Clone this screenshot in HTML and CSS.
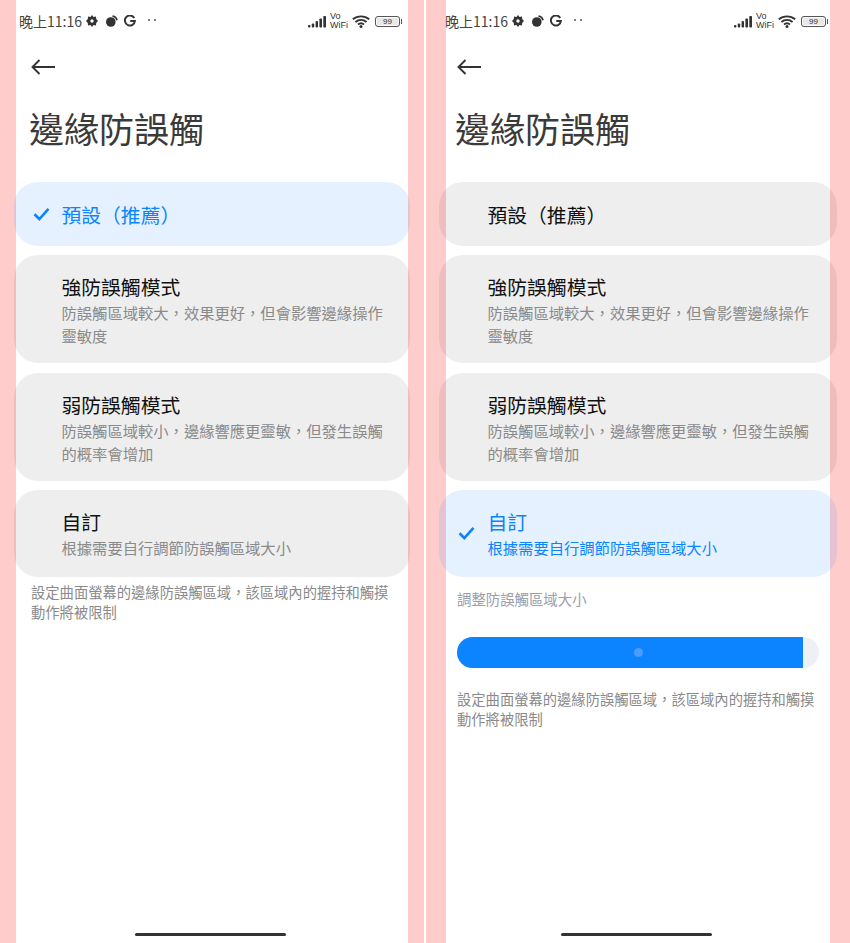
FILE: index.html
```html
<!DOCTYPE html>
<html lang="zh-Hant">
<head>
  <meta charset="UTF-8" />
  <title>邊緣防誤觸</title>
  <link rel="stylesheet" href="styles.css">
</head>
<body>
  <svg class="defs" width="0" height="0" aria-hidden="true">
    <symbol id="icon-gear" viewBox="0 0 12 12">
      <path fill="#333" fill-rule="evenodd" d="M6 0 7.500 1.900 10 1.600l.2 2.500L12 6l-1.800 1.900-.2 2.500-2.500-.3L6 12l-1.500-1.900-2.500.3-.2-2.500L0 6l1.800-1.900.2-2.500 2.500.3zM6 4.300a1.700 1.700 0 1 0 0 3.400 1.700 1.700 0 0 0 0-3.400z"/>
    </symbol>
    <symbol id="icon-moon" viewBox="0 0 12 12">
      <circle cx="4.800" cy="7" r="4.800" fill="#333"/>
      <path d="M6.500 1.200c2.300.3 4 1.900 4.500 4.100" fill="none" stroke="#333" stroke-width="1.800"/>
    </symbol>
    <symbol id="icon-g" viewBox="0 0 12 12">
      <path d="M10.200 2.900A5 5 0 1 0 10.900 6H6.300" fill="none" stroke="#333" stroke-width="2"/>
    </symbol>
    <symbol id="icon-signal" viewBox="0 0 18 12">
      <g fill="#333">
        <rect x="0" y="9" width="2.400" height="2.500" rx=".8"/>
        <rect x="3.800" y="7.500" width="2.400" height="4" rx=".8"/>
        <rect x="7.600" y="5" width="2.400" height="6.500" rx=".8"/>
        <rect x="11.400" y="2.500" width="2.600" height="9" rx=".8"/>
        <rect x="15.300" y="0" width="2.700" height="11.500" rx=".8"/>
      </g>
    </symbol>
    <symbol id="icon-wifi" viewBox="0 0 18 13">
      <g fill="none" stroke="#333" stroke-width="1.900">
        <path d="M.8 4.300C5.500.4 12.500.4 17.200 4.300"/>
        <path d="M3.400 7C6.700 4.300 11.300 4.300 14.600 7"/>
        <path d="M6 9.500C7.800 8 10.200 8 12 9.500"/>
      </g>
      <circle cx="9" cy="11.500" r="1.500" fill="#333"/>
    </symbol>
    <symbol id="icon-check" viewBox="0 0 17 14">
      <path d="M1.500 7.300 6.300 12 15.500 1.800" fill="none" stroke="#0d84ff" stroke-width="2.600"/>
    </symbol>
    <symbol id="icon-back" viewBox="0 0 24 16">
      <path d="M8.500 1 1.500 8l7 7M1.500 8H24" fill="none" stroke="#333" stroke-width="1.900"/>
    </symbol>
  </svg>

  <!-- left: default option selected -->
  <div class="phone phone-left">
    <div class="status-bar">
      <div class="status-left">
        <span class="clock">晚上11:16</span>
        <svg class="ic-small"><use href="#icon-gear"/></svg>
        <svg class="ic-small ic-moon"><use href="#icon-moon"/></svg>
        <svg class="ic-small ic-g"><use href="#icon-g"/></svg>
        <span class="dots"><i></i><i></i></span>
      </div>
      <div class="status-right">
        <svg class="ic-signal"><use href="#icon-signal"/></svg>
        <span class="vowifi">Vo<br>WiFi</span>
        <svg class="ic-wifi"><use href="#icon-wifi"/></svg>
        <span class="battery">99</span>
      </div>
    </div>
    <svg class="back"><use href="#icon-back"/></svg>
    <h1 class="title">邊緣防誤觸</h1>
    <div class="options">
      <div class="option option-short selected">
        <svg class="check"><use href="#icon-check"/></svg>
        <div class="option-name">預設（推薦）</div>
      </div>
      <div class="option">
        <div class="option-name">強防誤觸模式</div>
        <div class="option-desc">防誤觸區域較大，效果更好，但會影響邊緣操作靈敏度</div>
      </div>
      <div class="option">
        <div class="option-name">弱防誤觸模式</div>
        <div class="option-desc">防誤觸區域較小，邊緣響應更靈敏，但發生誤觸的概率會增加</div>
      </div>
      <div class="option option-custom">
        <div class="option-name">自訂</div>
        <div class="option-desc">根據需要自行調節防誤觸區域大小</div>
      </div>
    </div>
    <p class="note">設定曲面螢幕的邊緣防誤觸區域，該區域內的握持和觸摸動作將被限制</p>
    <div class="home-bar"></div>
  </div>

  <!-- right: custom option selected, slider shown -->
  <div class="phone phone-right">
    <div class="status-bar">
      <div class="status-left">
        <span class="clock">晚上11:16</span>
        <svg class="ic-small"><use href="#icon-gear"/></svg>
        <svg class="ic-small ic-moon"><use href="#icon-moon"/></svg>
        <svg class="ic-small ic-g"><use href="#icon-g"/></svg>
        <span class="dots"><i></i><i></i></span>
      </div>
      <div class="status-right">
        <svg class="ic-signal"><use href="#icon-signal"/></svg>
        <span class="vowifi">Vo<br>WiFi</span>
        <svg class="ic-wifi"><use href="#icon-wifi"/></svg>
        <span class="battery">99</span>
      </div>
    </div>
    <svg class="back"><use href="#icon-back"/></svg>
    <h1 class="title">邊緣防誤觸</h1>
    <div class="options">
      <div class="option option-short">
        <div class="option-name">預設（推薦）</div>
      </div>
      <div class="option">
        <div class="option-name">強防誤觸模式</div>
        <div class="option-desc">防誤觸區域較大，效果更好，但會影響邊緣操作靈敏度</div>
      </div>
      <div class="option">
        <div class="option-name">弱防誤觸模式</div>
        <div class="option-desc">防誤觸區域較小，邊緣響應更靈敏，但發生誤觸的概率會增加</div>
      </div>
      <div class="option option-custom selected">
        <svg class="check"><use href="#icon-check"/></svg>
        <div class="option-name">自訂</div>
        <div class="option-desc">根據需要自行調節防誤觸區域大小</div>
      </div>
    </div>
    <div class="slider-label">調整防誤觸區域大小</div>
    <div class="slider">
      <div class="slider-fill"><span class="slider-dot"></span></div>
    </div>
    <p class="note">設定曲面螢幕的邊緣防誤觸區域，該區域內的握持和觸摸動作將被限制</p>
    <div class="home-bar"></div>
  </div>
</body>
</html>
```

FILE: styles.css
```css
* {
  box-sizing: border-box;
}

html, body {
  margin: 0;
  height: 943px;
  overflow: hidden;
}

body {
  display: flex;
  gap: 2px;
  background: #fff;
  font-family: "Noto Sans CJK TC", "Noto Sans", sans-serif;
  color: #111;
}

.defs {
  position: absolute;
}

.phone {
  width: 424px;
  height: 943px;
  display: flex;
  flex-direction: column;
}

.phone-left {
  background: linear-gradient(90deg, #ffcccc 16px, #fff 16px, #fff 408px, #ffcccc 408px);
}

.phone-right {
  background: linear-gradient(90deg, #ffcccc 20px, #fff 20px, #fff 404px, #ffcccc 404px);
}

/* status bar */
.status-bar {
  display: flex;
  justify-content: space-between;
  align-items: center;
  height: 20px;
  margin-top: 11px;
  padding: 0 24px 0 19px;
}

.status-left, .status-right {
  display: flex;
  align-items: center;
}

.clock {
  font-size: 14px;
  color: #444;
  white-space: nowrap;
}

.ic-small {
  width: 12px;
  height: 12px;
  margin-left: 4px;
}

.ic-moon {
  margin-left: 8px;
}

.ic-g {
  margin-left: 6px;
}

.dots {
  display: flex;
  gap: 4px;
  margin-left: 12px;
  margin-top: -2px;
}

.dots i {
  width: 2px;
  height: 2px;
  border-radius: 50%;
  background: #555;
}

.ic-signal {
  width: 18px;
  height: 12px;
  margin-top: 2px;
}

.vowifi {
  font-family: "Liberation Sans", sans-serif;
  font-size: 9px;
  line-height: 9px;
  color: #333;
  margin-left: 4px;
}

.ic-wifi {
  width: 18px;
  height: 13px;
  margin-left: 4px;
}

.battery {
  position: relative;
  width: 25px;
  height: 11px;
  margin-left: 5px;
  border: 1px solid #555;
  border-radius: 3px;
  background: #e8e8e8;
  box-shadow: inset 0 0 0 1px #fff;
  font-family: "Liberation Sans", sans-serif;
  font-size: 8px;
  line-height: 9px;
  text-align: center;
  color: #333;
}

.battery::after {
  content: "";
  position: absolute;
  right: -3px;
  top: 2px;
  width: 1px;
  height: 5px;
  background: #555;
}

/* header */
.back {
  width: 24px;
  height: 16px;
  margin: 28px 0 0 31px;
  flex: none;
}

.title {
  margin: 27px 0 0 29px;
  font-size: 35px;
  font-weight: 400;
  line-height: 52px;
  color: #3a3a3a;
}

/* options */
.options {
  display: flex;
  flex-direction: column;
  gap: 9.34px;
  margin: 28px 13px 0 13px;
}

.phone-left .options {
  margin-left: 14px;
  margin-right: 14px;
}

.phone-left .option {
  padding-left: 47.5px;
}

.option {
  position: relative;
  min-height: 108px;
  padding: 18px 26px 0 48.5px;
  border-radius: 24px;
  background: rgba(0, 0, 0, 0.065);
}

.option-short {
  min-height: 64px;
  padding-top: 19px;
}

.option-custom {
  min-height: 87px;
}

.option-name {
  font-size: 19.8px;
  line-height: 28px;
  color: #111;
}

.option-desc {
  font-size: 15.3px;
  line-height: 23px;
  color: #8a8a8a;
}

.option.selected {
  background: rgba(20, 125, 255, 0.11);
}

.selected .option-name, .selected .option-desc {
  color: #0d84ff;
}

.check {
  position: absolute;
  left: 19px;
  top: 50%;
  width: 17px;
  height: 14px;
  margin-top: -7px;
}

/* slider */
.slider-label {
  margin: 11px 0 0 31px;
  font-size: 14.4px;
  line-height: 22px;
  color: #9a9daa;
}

.slider {
  height: 31px;
  margin: 27px 31px 0;
  border-radius: 16px;
  background: #edf0f5;
  overflow: hidden;
}

.slider-fill {
  display: flex;
  align-items: center;
  justify-content: center;
  width: 346px;
  height: 100%;
  background: #0d84ff;
}

.slider-dot {
  width: 9px;
  height: 9px;
  margin-left: 16px;
  border-radius: 50%;
  background: #4a9dfa;
}

.note {
  margin: 5px 29px 0 31px;
  font-size: 14.3px;
  line-height: 20px;
  color: #8a8a8a;
}

.slider + .note {
  margin-top: 21px;
}

.home-bar {
  width: 151px;
  height: 3px;
  margin: auto 0 7px 135px;
  border-radius: 2px;
  background: #333;
}
```
